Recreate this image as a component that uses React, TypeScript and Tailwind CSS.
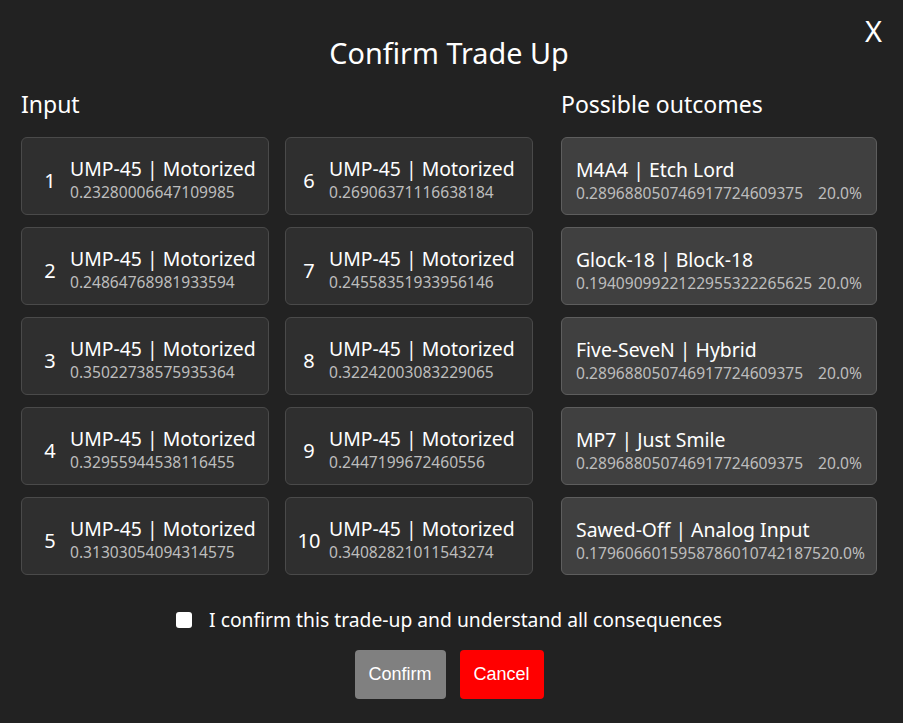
import React from "react";

const inputs = [
  { n: 1, float: "0.23280006647109985" },
  { n: 2, float: "0.24864768981933594" },
  { n: 3, float: "0.35022738575935364" },
  { n: 4, float: "0.32955944538116455" },
  { n: 5, float: "0.31303054094314575" },
  { n: 6, float: "0.26906371116638184" },
  { n: 7, float: "0.24558351933956146" },
  { n: 8, float: "0.32242003083229065" },
  { n: 9, float: "0.2447199672460556" },
  { n: 10, float: "0.34082821011543274" },
];

const outcomes = [
  { name: "M4A4 | Etch Lord", float: "0.289688050746917724609375" },
  { name: "Glock-18 | Block-18", float: "0.1940909922122955322265625" },
  { name: "Five-SeveN | Hybrid", float: "0.289688050746917724609375" },
  { name: "MP7 | Just Smile", float: "0.289688050746917724609375" },
  { name: "Sawed-Off | Analog Input", float: "0.17960660159587860107421875" },
];

function InputCard({ n, float, col }: { n: number; float: string; col: number }) {
  return (
    <div
      className={`flex items-center h-[78px] rounded-[6px] border border-[#4a4a4a] bg-[#2f2f2f] pt-[6px] ${
        col === 0 ? "pl-[15px]" : "pl-[10px]"
      }`}
    >
      <div className="w-[26px] mr-[7px] text-center text-[20px] text-white mt-[4px]">{n}</div>
      <div className="flex flex-col">
        <span className="text-[19.4px] leading-[26px] text-white">UMP-45 | Motorized</span>
        <span className="text-[15.6px] leading-[20px] text-[#bdbdbd]">{float}</span>
      </div>
    </div>
  );
}

function OutcomeCard({ name, float }: { name: string; float: string }) {
  return (
    <div className="flex flex-col justify-center h-[78px] rounded-[6px] border border-[#5e5e5e] bg-[#404040] px-[14px] pt-[7px]">
      <span className="text-[19.4px] leading-[26px] text-white">{name}</span>
      <div className="flex justify-between text-[15.6px] leading-[20px] text-[#bdbdbd]">
        <span>{float}</span>
        <span>20.0%</span>
      </div>
    </div>
  );
}

export default function App() {
  return (
    <div
      className="relative w-full h-[723px] bg-[#222222] pl-[21px] pr-[26px] text-white"
      style={{ fontFamily: '"Noto Sans", "Open Sans", sans-serif' }}
    >
      <button className="absolute top-[11px] right-[21px] text-[29px] leading-[40px] text-white">X</button>
      <h1 className="pt-[33px] text-center text-[28.8px] leading-[40px]">Confirm Trade Up</h1>
      <div className="flex gap-[28px] mt-[15px]">
        <div className="w-[512px] shrink-0">
          <h2 className="text-[23px] leading-[32px] mb-[17px]">Input</h2>
          <div className="grid grid-cols-2 gap-x-[16px] gap-y-[12px] grid-flow-col grid-rows-5">
            {inputs.map((it, i) => (
              <InputCard key={it.n} n={it.n} float={it.float} col={i < 5 ? 0 : 1} />
            ))}
          </div>
        </div>
        <div className="w-[316px] shrink-0">
          <h2 className="text-[23px] leading-[32px] mb-[17px]">Possible outcomes</h2>
          <div className="flex flex-col gap-[12px]">
            {outcomes.map((o) => (
              <OutcomeCard key={o.name} name={o.name} float={o.float} />
            ))}
          </div>
        </div>
      </div>
      <label className="flex items-center justify-center gap-[17px] mt-[31px] text-[19.3px]">
        <input type="checkbox" className="w-[16px] h-[16px] appearance-none rounded-[3px] bg-white" />
        <span>I confirm this trade-up and understand all consequences</span>
      </label>
      <div className="flex justify-center gap-[14px] mt-[15px]" style={{ fontFamily: '"Liberation Sans", Arial, sans-serif' }}>
        <button className="w-[91px] h-[49px] rounded-[4px] bg-[#808080] text-[18px] text-white">Confirm</button>
        <button className="w-[84px] h-[49px] rounded-[4px] bg-[#ff0000] text-[18px] text-white">Cancel</button>
      </div>
    </div>
  );
}
